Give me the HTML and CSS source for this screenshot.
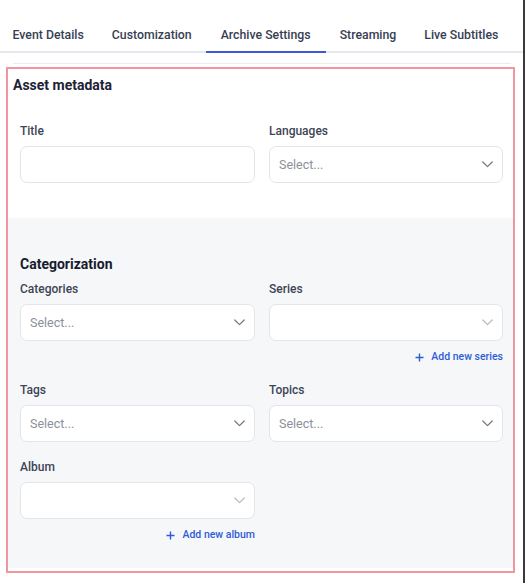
FILE: index.html
```html
<!DOCTYPE html>
<html lang="en">
<head>
<meta charset="utf-8">
<title>Archive Settings</title>
<link rel="stylesheet" href="styles.css">
</head>
<body>
<div class="window">
  <div class="app">
    <nav class="tabs">
      <a class="tab">Event Details</a>
      <a class="tab">Customization</a>
      <a class="tab active">Archive Settings</a>
      <a class="tab">Streaming</a>
      <a class="tab">Live Subtitles</a>
    </nav>
    <div class="divider"></div>
    <div class="panel">
      <section class="meta">
        <h2 class="section-title">Asset metadata</h2>
        <div class="grid">
          <div class="field">
            <label class="label">Title</label>
            <div class="control"></div>
          </div>
          <div class="field">
            <label class="label">Languages</label>
            <div class="control select">
              <span class="placeholder">Select...</span>
              <svg class="chev" width="11" height="7" viewBox="0 0 11 7"><polyline points="0.8,1 5.5,5.6 10.2,1" fill="none" stroke="#70757f" stroke-width="1.2" stroke-linecap="round" stroke-linejoin="round"/></svg>
            </div>
          </div>
        </div>
      </section>
      <section class="cat">
        <h3 class="cat-title">Categorization</h3>
        <div class="grid cat-grid">
          <div class="field">
            <label class="label">Categories</label>
            <div class="control select">
              <span class="placeholder">Select...</span>
              <svg class="chev" width="11" height="7" viewBox="0 0 11 7"><polyline points="0.8,1 5.5,5.6 10.2,1" fill="none" stroke="#70757f" stroke-width="1.2" stroke-linecap="round" stroke-linejoin="round"/></svg>
            </div>
          </div>
          <div class="field">
            <label class="label">Series</label>
            <div class="control select">
              <span class="placeholder"></span>
              <svg class="chev" width="11" height="7" viewBox="0 0 11 7"><polyline points="0.8,1 5.5,5.6 10.2,1" fill="none" stroke="#b6bac3" stroke-width="1.2" stroke-linecap="round" stroke-linejoin="round"/></svg>
            </div>
            <a class="add-link">
              <svg width="9" height="9" viewBox="0 0 9 9"><path d="M4.5 0.5v8M0.5 4.5h8" stroke="#2f5cd6" stroke-width="1.4" fill="none"/></svg>
              <span>Add new series</span>
            </a>
          </div>
          <div class="field">
            <label class="label">Tags</label>
            <div class="control select">
              <span class="placeholder">Select...</span>
              <svg class="chev" width="11" height="7" viewBox="0 0 11 7"><polyline points="0.8,1 5.5,5.6 10.2,1" fill="none" stroke="#70757f" stroke-width="1.2" stroke-linecap="round" stroke-linejoin="round"/></svg>
            </div>
          </div>
          <div class="field">
            <label class="label">Topics</label>
            <div class="control select">
              <span class="placeholder">Select...</span>
              <svg class="chev" width="11" height="7" viewBox="0 0 11 7"><polyline points="0.8,1 5.5,5.6 10.2,1" fill="none" stroke="#70757f" stroke-width="1.2" stroke-linecap="round" stroke-linejoin="round"/></svg>
            </div>
          </div>
          <div class="field">
            <label class="label">Album</label>
            <div class="control select">
              <span class="placeholder"></span>
              <svg class="chev" width="11" height="7" viewBox="0 0 11 7"><polyline points="0.8,1 5.5,5.6 10.2,1" fill="none" stroke="#b6bac3" stroke-width="1.2" stroke-linecap="round" stroke-linejoin="round"/></svg>
            </div>
            <a class="add-link">
              <svg width="9" height="9" viewBox="0 0 9 9"><path d="M4.5 0.5v8M0.5 4.5h8" stroke="#2f5cd6" stroke-width="1.4" fill="none"/></svg>
              <span>Add new album</span>
            </a>
          </div>
        </div>
      </section>
    </div>
  </div>
  <div class="edge"></div>
</div>
</body>
</html>
```

FILE: styles.css
```css
* { box-sizing: border-box; }

html, body {
  margin: 0;
  padding: 0;
  background: #ffffff;
}

body {
  font-family: Roboto, "Liberation Sans", Arial, sans-serif;
  color: #3b4254;
}

.window {
  display: flex;
  height: 583px;
  width: 526px;
}

.app {
  width: 523px;
  flex: none;
}

.edge {
  width: 2px;
  background: #3a3a3c;
  flex: none;
}

.tabs {
  display: flex;
  height: 53px;
  border-bottom: 2px solid #e6e7ec;
  margin-left: -1.5px;
}

.tab {
  display: block;
  height: 53px;
  padding: 27px 14px 0;
  font-size: 12.3px;
  line-height: 16px;
  font-weight: 500;
  color: #373e53;
  white-space: nowrap;
  border-bottom: 2px solid transparent;
}

.tab.active {
  border-bottom-color: #3a5bd8;
  padding-left: 15px;
  padding-right: 15px;
}

.divider {
  height: 1px;
  background: #ececf0;
  margin: 10px 12px 0 13px;
}

.panel {
  margin: 3px 0 0 6px;
  width: 509px;
  height: 506px;
  border: 2px solid #f3959e;
}

.meta {
  padding: 6px 0 35px 5px;
}

.section-title {
  margin: 0 0 26px;
  font-size: 14px;
  line-height: 20px;
  font-weight: 700;
  color: #1d2235;
}

.grid {
  display: grid;
  grid-template-columns: 235px 234px;
  column-gap: 14px;
}

.meta .grid {
  margin-left: 7px;
}

.field {
  display: flex;
  flex-direction: column;
}

.label {
  font-size: 12px;
  line-height: 18px;
  font-weight: 500;
  color: #3d4456;
  padding-top: 1px;
  margin-bottom: 6px;
}

.control {
  height: 37px;
  border: 1px solid #e4e5ea;
  border-radius: 7px;
  background: #ffffff;
}

.select {
  display: flex;
  align-items: center;
  justify-content: space-between;
  padding: 0 9px 0 9px;
}

.placeholder {
  font-size: 12.5px;
  color: #8c9099;
}

.chev {
  display: block;
}

.cat {
  background: #f6f7f9;
  padding: 36px 10px 25px 12px;
  margin-bottom: 3px;
}

.cat-title {
  margin: 0 0 5px;
  font-size: 14px;
  line-height: 20px;
  font-weight: 700;
  color: #161b2e;
}

.cat-grid {
  row-gap: 15px;
}

.add-link {
  display: flex;
  align-items: center;
  justify-content: flex-end;
  gap: 7px;
  margin-top: 8px;
  height: 16px;
  font-size: 10.5px;
  line-height: 16px;
  font-weight: 500;
  color: #2f5cd6;
}

.add-link svg {
  display: block;
}
```
